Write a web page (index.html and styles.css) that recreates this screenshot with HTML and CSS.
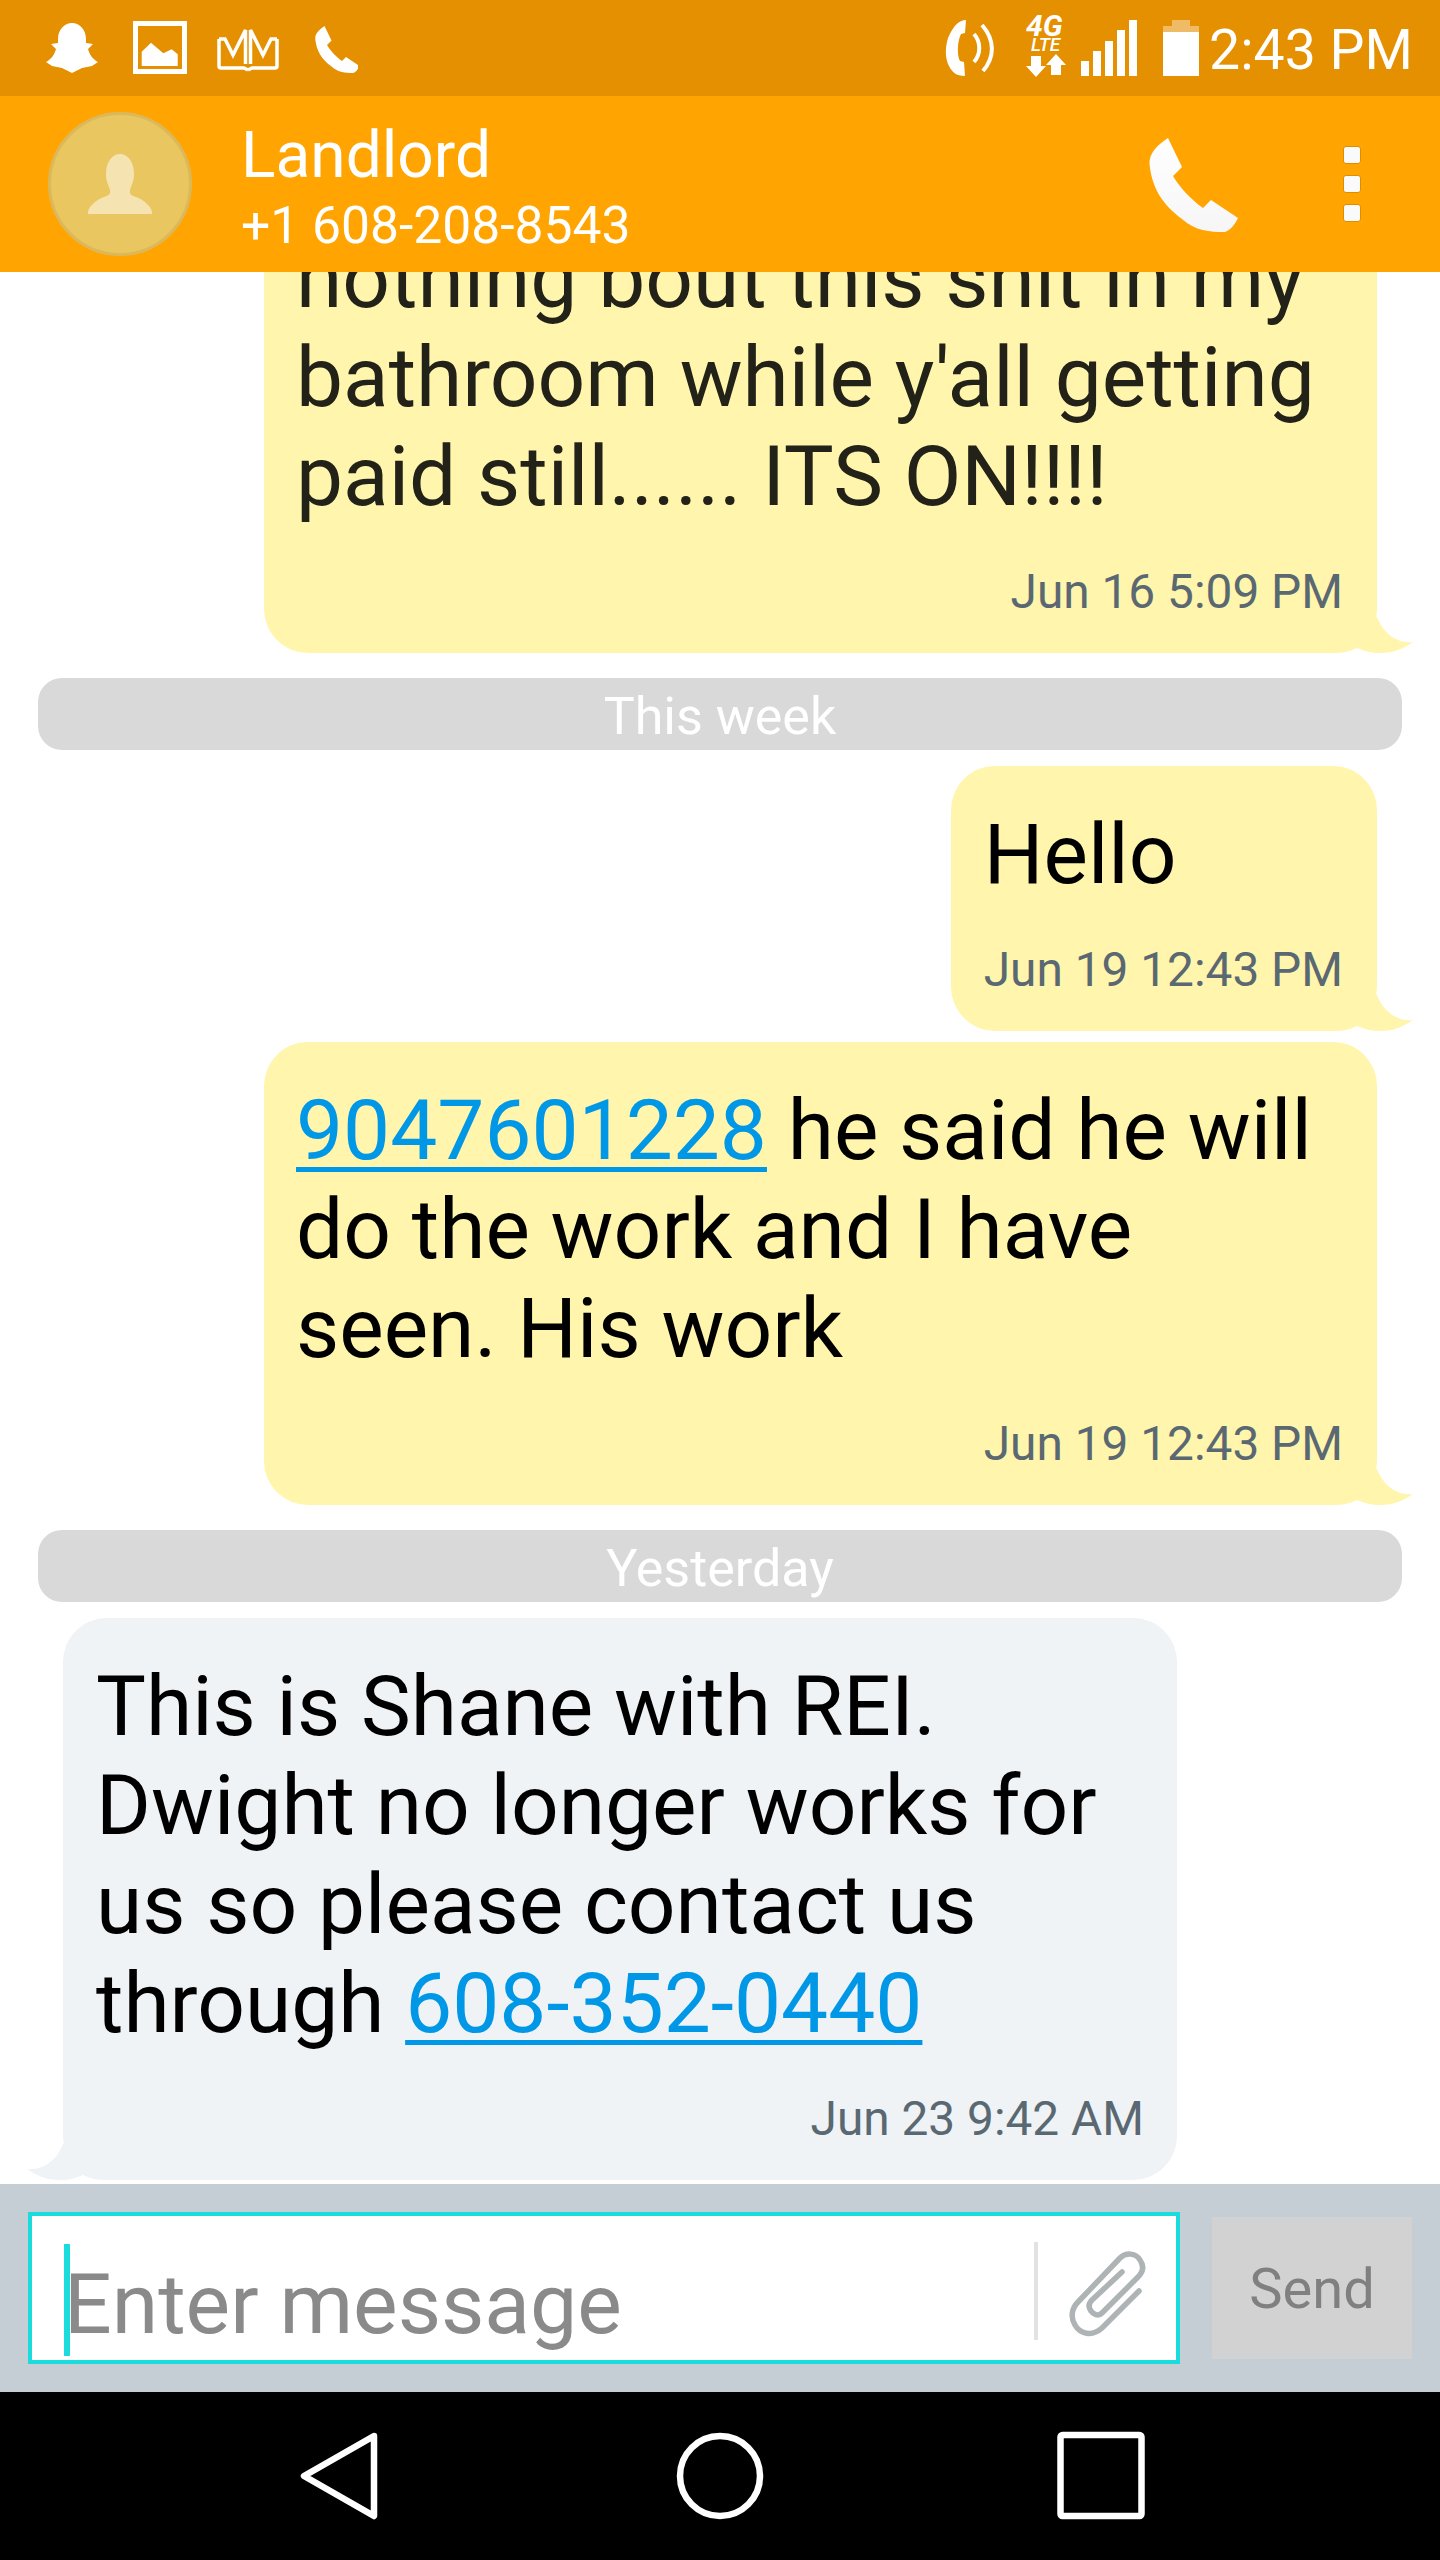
FILE: index.html
```html
<!DOCTYPE html>
<html lang="en">
<head>
<meta charset="utf-8">
<title>Landlord</title>
<link rel="stylesheet" href="styles.css">
</head>
<body>
<svg class="defs" width="0" height="0" aria-hidden="true">
  <defs>
    <path id="handset" d="M36 12 C24 20 17 28 17.5 38 C20 62 30 78 50 93 C63 105 78 106 93 106 C99 104 103 98 106 92 L79 74 L71 82 C58 73 47 60 41 50 L50 41 Z"/>
    <path id="tail-shape" d="M44 0 C50 16 64 27 80 25 C69 33 58 36 47 36 C38 36 31 34 24 31 C16 35 9 36 0 36 L0 0Z"/>
    <linearGradient id="sheen" x1="0" y1="0" x2="0" y2="1">
      <stop offset="0" stop-color="#ffffff"/>
      <stop offset="1" stop-color="#f6f6f6"/>
    </linearGradient>
  </defs>
</svg>

<div class="app">
  <header class="status">
    <div class="status-left">
      <svg class="ic-snap" viewBox="0 0 54 96"><path d="M27 23 C35 23 41 30 41 39 V43 L48 44 L43 49 C45 56 49 60 53 62 L47 66 L37 68 L27 73 L17 68 L7 66 L1 62 C5 60 9 56 11 49 L6 44 L13 43 V39 C13 30 19 23 27 23Z"/></svg>
      <svg class="ic-photo" viewBox="0 0 54 96">
        <rect class="line" x="2.5" y="23.5" width="49" height="48" stroke-width="5"/>
        <path d="M8.7 51.7 L18 42.7 L30.3 53.3 L38.7 49.3 L44.7 54.3 V66 H8.7Z"/>
      </svg>
      <svg class="ic-crown" viewBox="0 0 62 96">
        <g class="line" stroke-width="3.5">
          <path d="M2 39 H8 L16 55 L28.500 30 V64"/>
          <path d="M2 39 V66 Q2 68 4 68 H27 L31 70"/>
          <path d="M60 39 H54 L46 55 L33.500 30 V64"/>
          <path d="M60 39 V66 Q60 68 58 68 H35 L31 70"/>
        </g>
      </svg>
      <svg class="ic-phone" viewBox="0 0 45 96"><use href="#handset" transform="translate(-6.500 20) scale(.5)"/></svg>
    </div>
    <div class="status-right">
      <svg class="ic-volte" viewBox="0 0 51 96">
        <path d="M21 20 C14 20 8 26 3 38 C0 48 0 58 4 66 C7 72 11 76 20 76 L19 62 L15 61 C12 56 12 42 16 34 L20 33 Z"/>
        <g class="line" stroke-width="4">
          <path d="M29 34 C36 42 36 54 29 62"/>
          <path d="M37 25 C50 40 50 57 38 71"/>
        </g>
      </svg>
      <svg class="ic-net" viewBox="0 0 42 96">
        <text class="net-big" x="1" y="36">4G</text>
        <text class="net-small" x="6" y="51">LTE</text>
        <path d="M6 56 H16 V66 H21 L11 77 L1 66 H6Z"/>
        <path d="M31 54 L41 65 H36 V75 H26 V65 H21Z"/>
      </svg>
      <svg class="ic-signal" viewBox="0 0 56 96">
        <rect x="0" y="61" width="8" height="15"/>
        <rect x="12" y="51" width="8" height="25"/>
        <rect x="24" y="41" width="8" height="35"/>
        <rect x="36" y="30" width="8" height="46"/>
        <rect x="48" y="20" width="8" height="56"/>
      </svg>
      <svg class="ic-battery" viewBox="0 0 36 96">
        <rect class="pale" x="9" y="20" width="18" height="6"/>
        <rect class="pale" x="0" y="26" width="36" height="6"/>
        <rect x="0" y="32" width="36" height="44"/>
      </svg>
      <span class="clock">2:43 PM</span>
    </div>
  </header>

  <section class="titlebar">
    <div class="avatar">
      <svg class="ic-person" viewBox="0 0 64 60"><path d="M32 0 C40 0 46 8 46 20 C46 28 43 32 42 36 C41 40 44 42 48 43 C56 46 63 52 64 58 V60 H0 V58 C1 52 8 46 16 43 C20 42 23 40 22 36 C21 32 18 28 18 20 C18 8 24 0 32 0Z"/></svg>
    </div>
    <div class="contact">
      <div class="contact-name">Landlord</div>
      <div class="contact-number">+1 608-208-8543</div>
    </div>
    <svg class="ic-call" viewBox="10 5 100 106"><use href="#handset"/></svg>
    <div class="menu"><span></span><span></span><span></span></div>
  </section>

  <main class="thread">
    <article class="bubble out wide faded">
      <p class="body">nothing bout this shit in my<br>bathroom while y'all getting<br>paid still...... ITS ON!!!!</p>
      <time class="stamp">Jun 16 5:09 PM</time>
      <svg class="tail" viewBox="0 0 80 36"><use href="#tail-shape"/></svg>
    </article>
    <div class="divider">This week</div>
    <article class="bubble out">
      <p class="body">Hello</p>
      <time class="stamp">Jun 19 12:43 PM</time>
      <svg class="tail" viewBox="0 0 80 36"><use href="#tail-shape"/></svg>
    </article>
    <article class="bubble out wide next">
      <p class="body"><a href="#" class="link">9047601228</a> he said he will<br>do the work and I have<br>seen. His work</p>
      <time class="stamp">Jun 19 12:43 PM</time>
      <svg class="tail" viewBox="0 0 80 36"><use href="#tail-shape"/></svg>
    </article>
    <div class="divider">Yesterday</div>
    <article class="bubble in">
      <p class="body">This is Shane with REI.<br>Dwight no longer works for<br>us so please contact us<br>through <a href="#" class="link">608-352-0440</a></p>
      <time class="stamp">Jun 23 9:42 AM</time>
      <svg class="tail" viewBox="0 0 80 36"><use href="#tail-shape"/></svg>
    </article>
  </main>

  <section class="composer">
    <div class="field">
      <span class="caret"></span>
      <span class="placeholder">Enter message</span>
      <span class="field-rule"></span>
      <svg class="ic-clip" viewBox="0 0 120 120"><path d="M89 61 L52 98 C42 107 30 104 25 95 C20 87 22 78 28 72 L70 28 C76 22 86 23 90 30 C95 37 92 43 88 47 L52 83 C48 87 43 84 41 81 C38 77 39 73 42 70 L72 42"/></svg>
    </div>
    <div class="send">Send</div>
  </section>

  <nav class="softkeys">
    <svg viewBox="0 0 90 90"><path class="line key" d="M80 5 L10 45 L80 85Z"/></svg>
    <svg viewBox="0 0 90 90"><circle class="line key" cx="45" cy="45" r="40"/></svg>
    <svg viewBox="0 0 90 90"><rect class="line key" x="4.500" y="4" width="81" height="81" rx="2"/></svg>
  </nav>
</div>
</body>
</html>
```
FILE: styles.css
```css
* { box-sizing: border-box; }

html, body {
  margin: 0;
  padding: 0;
  background: #fff;
}

body {
  font-family: Roboto, "Liberation Sans", sans-serif;
}

.defs { position: absolute; }

.app {
  width: 1440px;
  height: 2560px;
  display: flex;
  flex-direction: column;
  overflow: hidden;
}

svg { display: block; fill: #fff; flex: none; }
svg .line { fill: none; stroke: #fff; }

/* Status bar */
.status {
  height: 96px;
  flex: none;
  display: flex;
  justify-content: space-between;
  background: #e49000;
  color: #fff;
}

.status-left {
  display: flex;
  align-items: center;
  padding-left: 45px;
}

.status-left svg { height: 96px; }
.ic-snap { width: 54px; }
.ic-photo { width: 54px; margin-left: 34px; }
.ic-crown { width: 62px; margin-left: 30px; }
.ic-phone { width: 45px; margin-left: 34px; }

.status-right {
  display: flex;
  align-items: center;
  padding-right: 32px;
}

.status-right svg { height: 96px; }
.ic-volte { width: 51px; }
.ic-net { width: 42px; margin-left: 29px; }
.ic-signal { width: 56px; margin-left: 14px; }
.ic-battery { width: 36px; margin-left: 26px; }
.pale { fill: #f0bb66; }

.net-big { font: italic 700 30px Roboto, sans-serif; }
.net-small { font: italic 500 19px Roboto, sans-serif; }

.clock {
  width: 199px;
  margin-left: 10px;
  padding-top: 5px;
  font-size: 55.4px;
  line-height: 96px;
  white-space: nowrap;
}

/* Conversation title */
.titlebar {
  height: 176px;
  flex: none;
  display: flex;
  align-items: center;
  padding-left: 48px;
  background: #ffa400;
  color: #fff;
  position: relative;
  z-index: 1;
}

.avatar {
  width: 144px;
  height: 144px;
  flex: none;
  display: flex;
  align-items: center;
  justify-content: center;
  border-radius: 50%;
  background: #e9c65f;
  border: 3px solid #dbb95a;
}

.ic-person { width: 64px; height: 60px; fill: #f5e4b2; }

.contact {
  margin-left: 49px;
  margin-top: 7px;
}

.contact-name {
  font-size: 64px;
  line-height: 76px;
}

.contact-number {
  margin-top: 1px;
  font-size: 51.6px;
  line-height: 62px;
}

.ic-call {
  width: 100px;
  height: 106px;
  margin-left: auto;
  fill: url(#sheen);
}

.menu {
  display: flex;
  flex-direction: column;
  gap: 11px;
  margin-left: 101px;
  margin-right: 79px;
}

.menu span {
  width: 18px;
  height: 18px;
  border-radius: 3px;
  background: #fafafa;
  border: 1px solid #d98f00;
}

/* Message list, pinned to the composer and clipped under the title */
.thread {
  flex: 1;
  min-height: 0;
  display: flex;
  flex-direction: column;
  justify-content: flex-end;
  padding-bottom: 4px;
  overflow: hidden;
  background: #fff;
}

.bubble {
  position: relative;
  flex: none;
  padding: 39px 34px 33px 33px;
  border-radius: 44px;
}

.bubble.out {
  align-self: flex-end;
  margin-right: 63px;
  background: #fff5ad;
}

.bubble.wide {
  width: 1113px;
  padding-left: 32px;
}

.bubble.next { margin-top: 11px; }

.bubble.in {
  align-self: flex-start;
  margin-left: 63px;
  width: 1114px;
  padding-right: 33px;
  background: #eff3f6;
}

.faded .body { color: #222219; }

.body {
  margin: 0;
  font-size: 83.8px;
  line-height: 99px;
  color: #000;
  white-space: nowrap;
}

.link {
  color: #0098e6;
  text-decoration: underline;
  text-decoration-thickness: 5px;
  text-underline-offset: 8px;
}

.stamp {
  display: block;
  margin-top: 38px;
  font-size: 47.8px;
  line-height: 56px;
  color: #5a6872;
  text-align: right;
  white-space: nowrap;
}

.tail {
  position: absolute;
  bottom: 0;
  right: -36px;
  width: 80px;
  height: 36px;
  fill: #fff5ad;
}

.bubble.in .tail {
  right: auto;
  left: -36px;
  transform: scaleX(-1);
  fill: #eff3f6;
}

.divider {
  flex: none;
  height: 72px;
  margin: 25px 38px 16px;
  border-radius: 24px;
  background: #d9d9d9;
  color: #fff;
  font-size: 52px;
  line-height: 77px;
  text-align: center;
  overflow: hidden;
}

/* Composer */
.composer {
  height: 208px;
  flex: none;
  display: flex;
  align-items: center;
  padding: 0 28px;
  background: #c5cdd5;
}

.field {
  position: relative;
  width: 1152px;
  height: 152px;
  flex: none;
  display: flex;
  align-items: center;
  border: 4px solid #1bdcdc;
  background: #fff;
  padding-left: 32px;
  padding-right: 6px;
}

.caret {
  position: absolute;
  left: 32px;
  top: 28px;
  width: 6px;
  height: 112px;
  background: #1bdcdc;
}

.placeholder {
  flex: 1;
  margin-top: 32px;
  font-size: 84px;
  line-height: 99px;
  color: #8a8a8a;
  white-space: nowrap;
}

.field-rule {
  width: 4px;
  height: 98px;
  margin-top: 6px;
  flex: none;
  background: #e2e2e2;
}

.ic-clip {
  width: 120px;
  height: 120px;
  margin: 4px 0 0 12px;
  fill: none;
  stroke: #aeb3b5;
  stroke-width: 5.5;
  stroke-linecap: round;
}

.send {
  width: 200px;
  height: 142px;
  margin-left: 32px;
  flex: none;
  background: #d2d2d2;
  color: #808080;
  font-size: 56px;
  line-height: 144px;
  text-align: center;
  overflow: hidden;
}

/* Navigation keys */
.softkeys {
  height: 168px;
  flex: none;
  display: flex;
  align-items: center;
  justify-content: center;
  gap: 291px;
  background: #000;
}

.softkeys svg { width: 90px; height: 90px; }

.key {
  stroke-width: 6.5;
  stroke-linejoin: round;
}
```
